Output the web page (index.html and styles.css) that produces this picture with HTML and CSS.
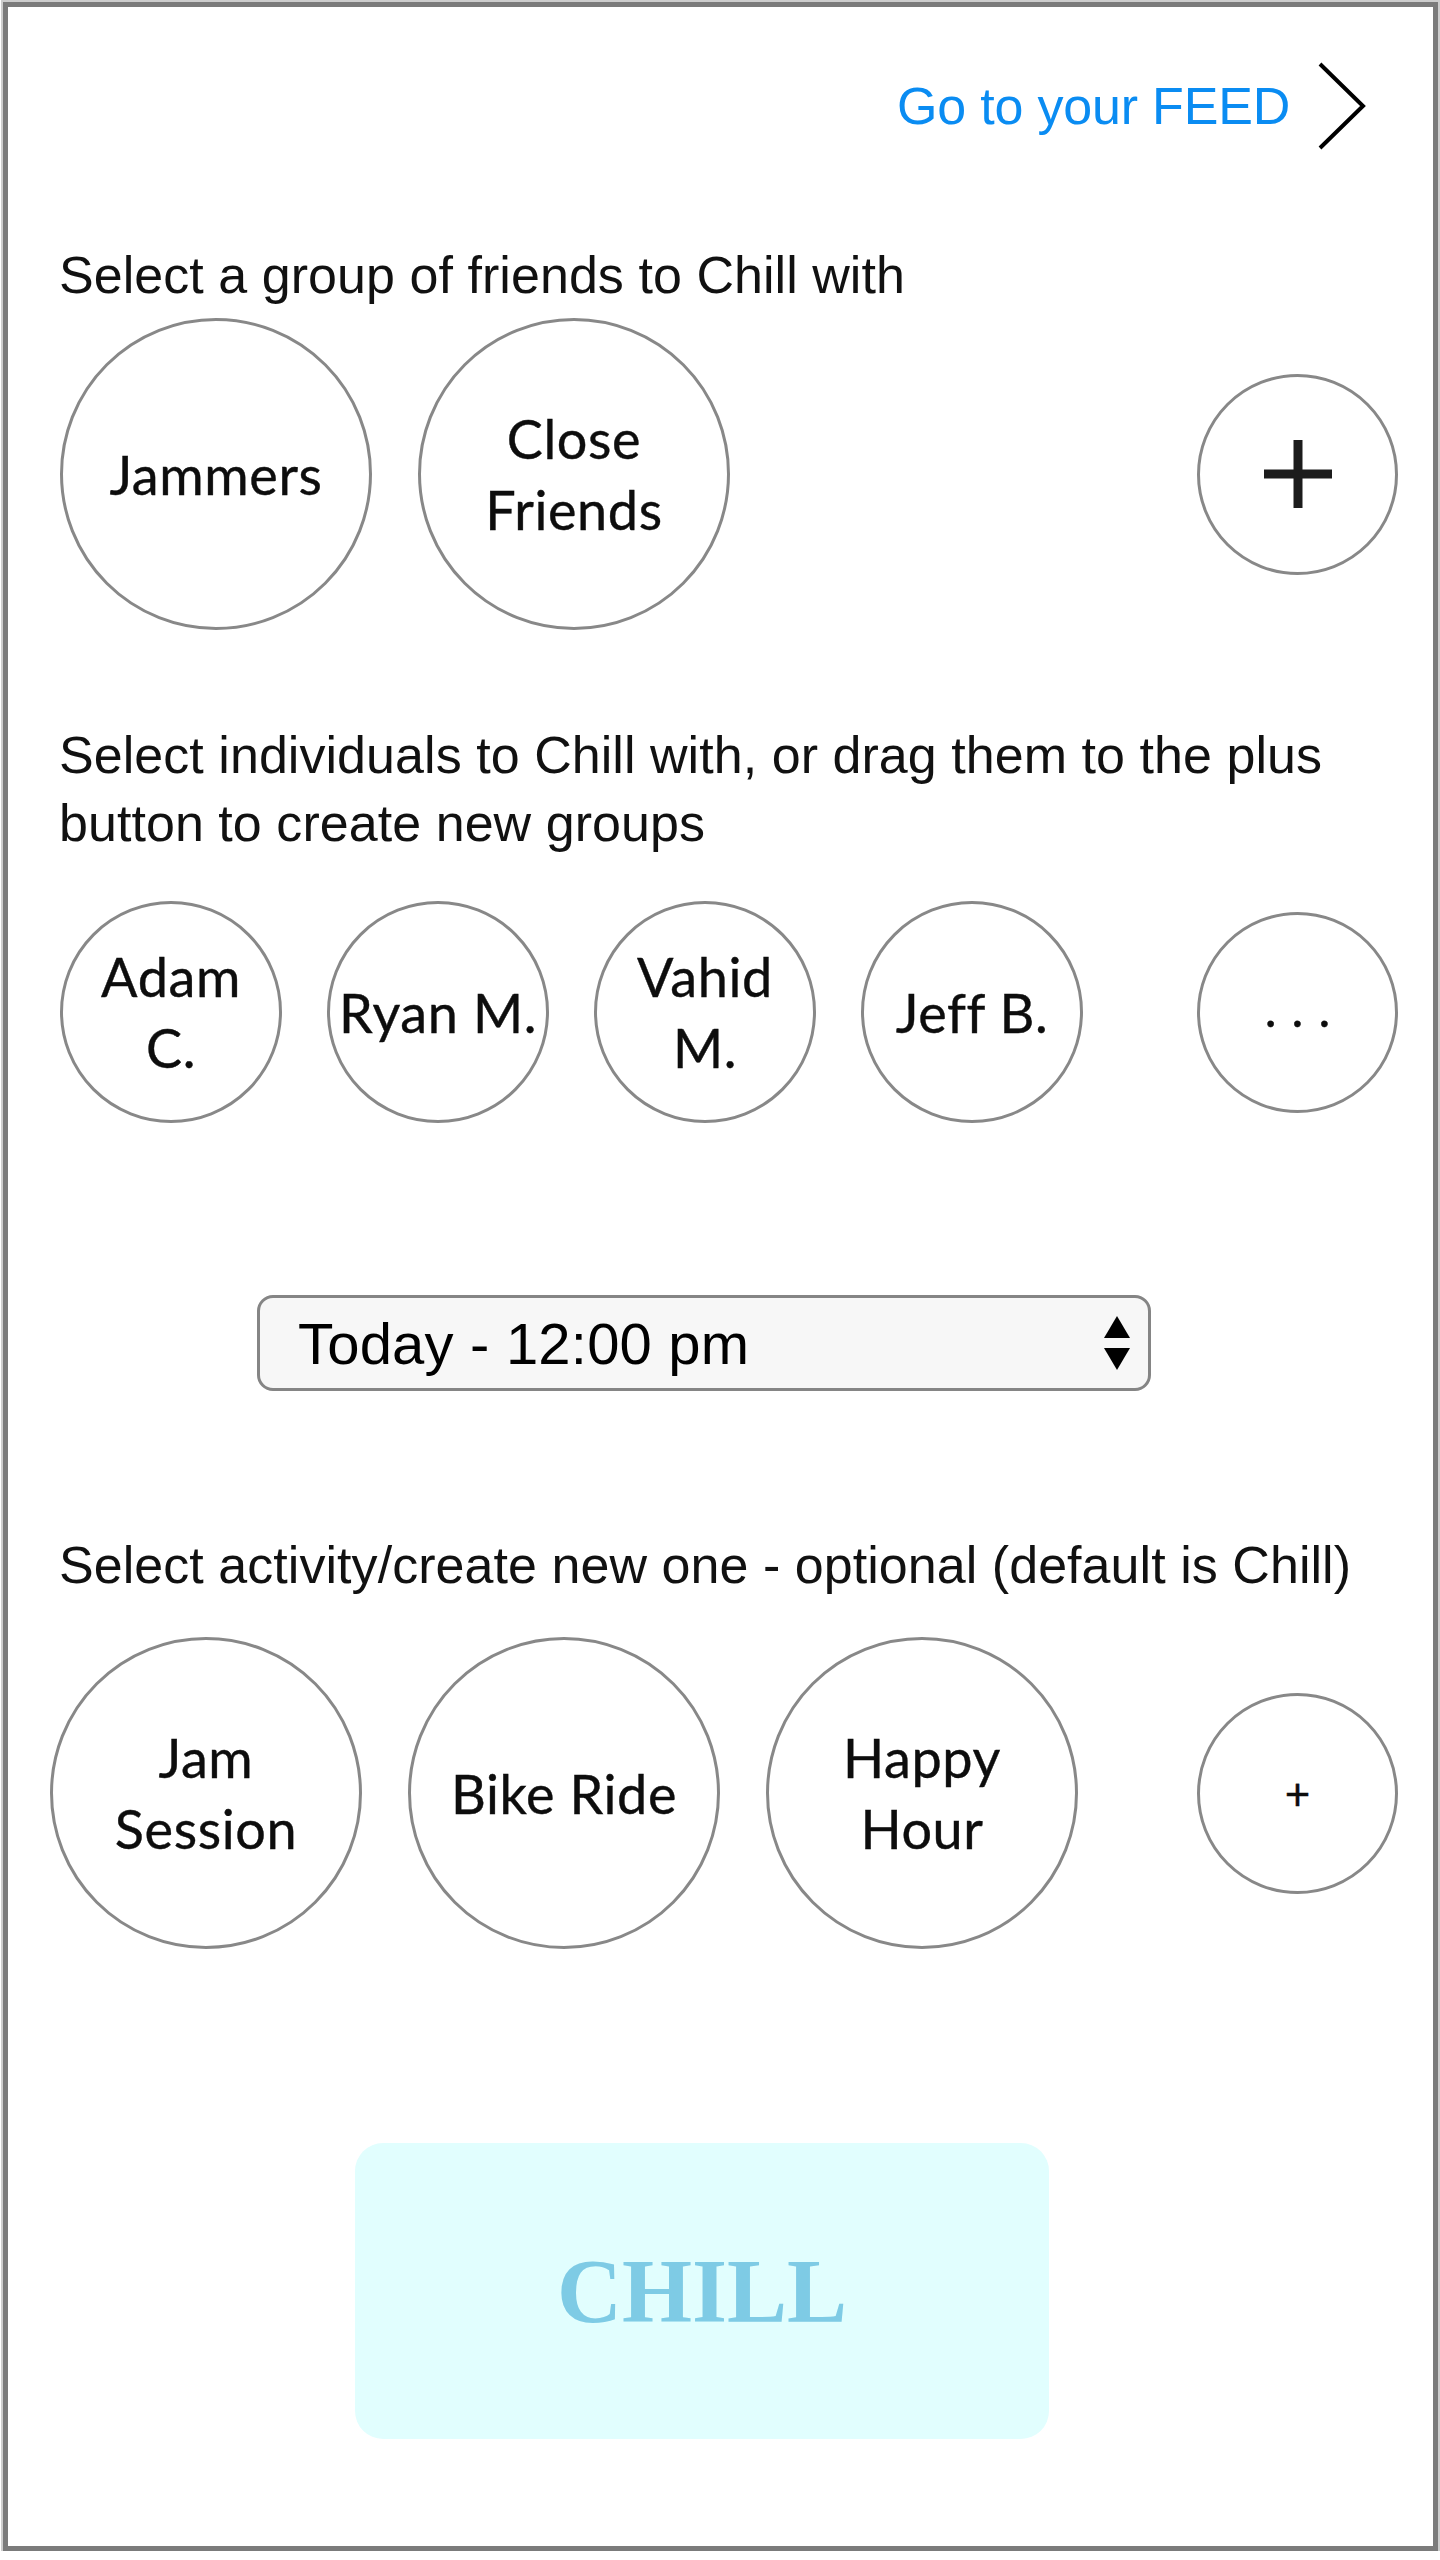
FILE: index.html
```html
<!DOCTYPE html>
<html lang="en">
<head>
<meta charset="utf-8">
<title>Chill</title>
<link rel="stylesheet" href="styles.css">
</head>
<body>
<div class="frame">
  <div class="header">
    <a class="feed-link" href="#">Go to your FEED</a>
    <svg class="chevron" width="50" height="88" viewBox="0 0 50 88" aria-hidden="true">
      <polyline points="3,2 46,44 3,86" fill="none" stroke="#000" stroke-width="4" stroke-linejoin="miter"/>
    </svg>
  </div>

  <p class="label label-groups">Select a group of friends to Chill with</p>
  <div class="row row-groups">
    <div class="circle big">Jammers</div>
    <div class="circle big">Close<br>Friends</div>
    <div class="circle small add">
      <svg width="68" height="68" viewBox="0 0 68 68" aria-hidden="true">
        <line x1="34" y1="0" x2="34" y2="68" stroke="#1c1c1c" stroke-width="9"/>
        <line x1="0" y1="34" x2="68" y2="34" stroke="#1c1c1c" stroke-width="9"/>
      </svg>
    </div>
  </div>

  <p class="label label-people">Select individuals to Chill with, or drag them to the plus button to create new groups</p>
  <div class="row row-people">
    <div class="circle mid">Adam<br>C.</div>
    <div class="circle mid">Ryan M.</div>
    <div class="circle mid">Vahid<br>M.</div>
    <div class="circle mid">Jeff B.</div>
    <div class="circle small add"><span class="dots">...</span></div>
  </div>

  <div class="select">
    <span class="select-value">Today - 12:00 pm</span>
    <svg class="select-arrows" width="28" height="54" viewBox="0 0 28 54" aria-hidden="true">
      <polygon points="14,0 27,22 1,22" fill="#000"/>
      <polygon points="1,32 27,32 14,54" fill="#000"/>
    </svg>
  </div>

  <p class="label label-activity">Select activity/create new one - optional (default is Chill)</p>
  <div class="row row-activity">
    <div class="circle big">Jam<br>Session</div>
    <div class="circle big">Bike Ride</div>
    <div class="circle big">Happy<br>Hour</div>
    <div class="circle small add"><span class="small-plus">+</span></div>
  </div>

  <button class="chill-btn" type="button">CHILL</button>
</div>
</body>
</html>
```

FILE: styles.css
```css
html, body {
  margin: 0;
  padding: 0;
  background: #ffffff;
}

body {
  font-family: "Liberation Sans", Arial, Helvetica, sans-serif;
  color: #111;
}

.frame {
  box-sizing: border-box;
  margin: 2px 2px 0 3px;
  height: 2549px;
  border: 5px solid #7b7b7b;
  box-shadow: 0 0 0 2px #cdcdcd;
  padding: 56px 35px 0 51px;
  display: flex;
  flex-direction: column;
  align-items: flex-start;
}

/* Header link */
.header {
  align-self: stretch;
  display: flex;
  justify-content: flex-end;
  align-items: center;
  height: 86px;
  padding-right: 31px;
  gap: 27px;
}

.feed-link {
  font-size: 52px;
  color: #0a8cf2;
  text-decoration: none;
  letter-spacing: -0.2px;
}

.chevron {
  display: block;
  flex: none;
}

/* Section labels */
.label {
  margin: 0;
  font-size: 52px;
  line-height: 68px;
  color: #111;
  width: 1370px;
  letter-spacing: 0.05px;
}

.label-groups { margin-top: 92px; }
.label-people { margin-top: 91px; }
.label-activity { margin-top: 140px; }

/* Rows of circles */
.row {
  align-self: stretch;
  display: flex;
  align-items: center;
}

.row-groups { margin-top: 9px; gap: 46px; padding-left: 1px; }
.row-people { margin-top: 44px; gap: 45px; padding-left: 1px; }
.row-activity { margin-top: 38px; gap: 46px; margin-left: -9px; }

.circle {
  box-sizing: border-box;
  flex: none;
  border: 3px solid #888;
  border-radius: 50%;
  display: flex;
  align-items: center;
  justify-content: center;
  text-align: center;
  font-family: Lato, "Noto Sans", sans-serif;
  font-size: 54px;
  letter-spacing: 0.6px;
  line-height: 71px;
  color: #0d0d0d;
  background: #fff;
  -webkit-text-stroke: 0.4px #0d0d0d;
}

.circle.big { width: 312px; height: 312px; }
.circle.mid { width: 222px; height: 222px; white-space: nowrap; }
.circle.small { width: 201px; height: 201px; }

.circle.add { margin-left: auto; }

.circle svg { display: block; }

.dots {
  letter-spacing: 15px;
  padding-left: 15px;
  line-height: 1;
  font-size: 50px;
  position: relative;
  top: -4px;
}

.small-plus {
  font-size: 44px;
  line-height: 1;
  font-weight: 400;
  letter-spacing: 0;
}

/* Date/time select */
.select {
  box-sizing: border-box;
  margin-top: 172px;
  margin-left: 198px;
  width: 894px;
  height: 96px;
  border: 3px solid #858585;
  border-radius: 16px;
  background: #f7f7f7;
  display: flex;
  align-items: center;
  justify-content: space-between;
  padding: 0 17px 0 38px;
}

.select-value {
  font-size: 58px;
  color: #000;
  letter-spacing: 0.2px;
}

.select-arrows { display: block; }

/* Chill button */
.chill-btn {
  margin-top: 194px;
  margin-left: 296px;
  width: 694px;
  height: 296px;
  border: none;
  border-radius: 28px;
  background: #e1fefe;
  color: #7ecbe5;
  font-family: "Liberation Serif", "Times New Roman", serif;
  font-weight: 700;
  font-size: 90px;
  padding: 0;
  cursor: pointer;
}
```
